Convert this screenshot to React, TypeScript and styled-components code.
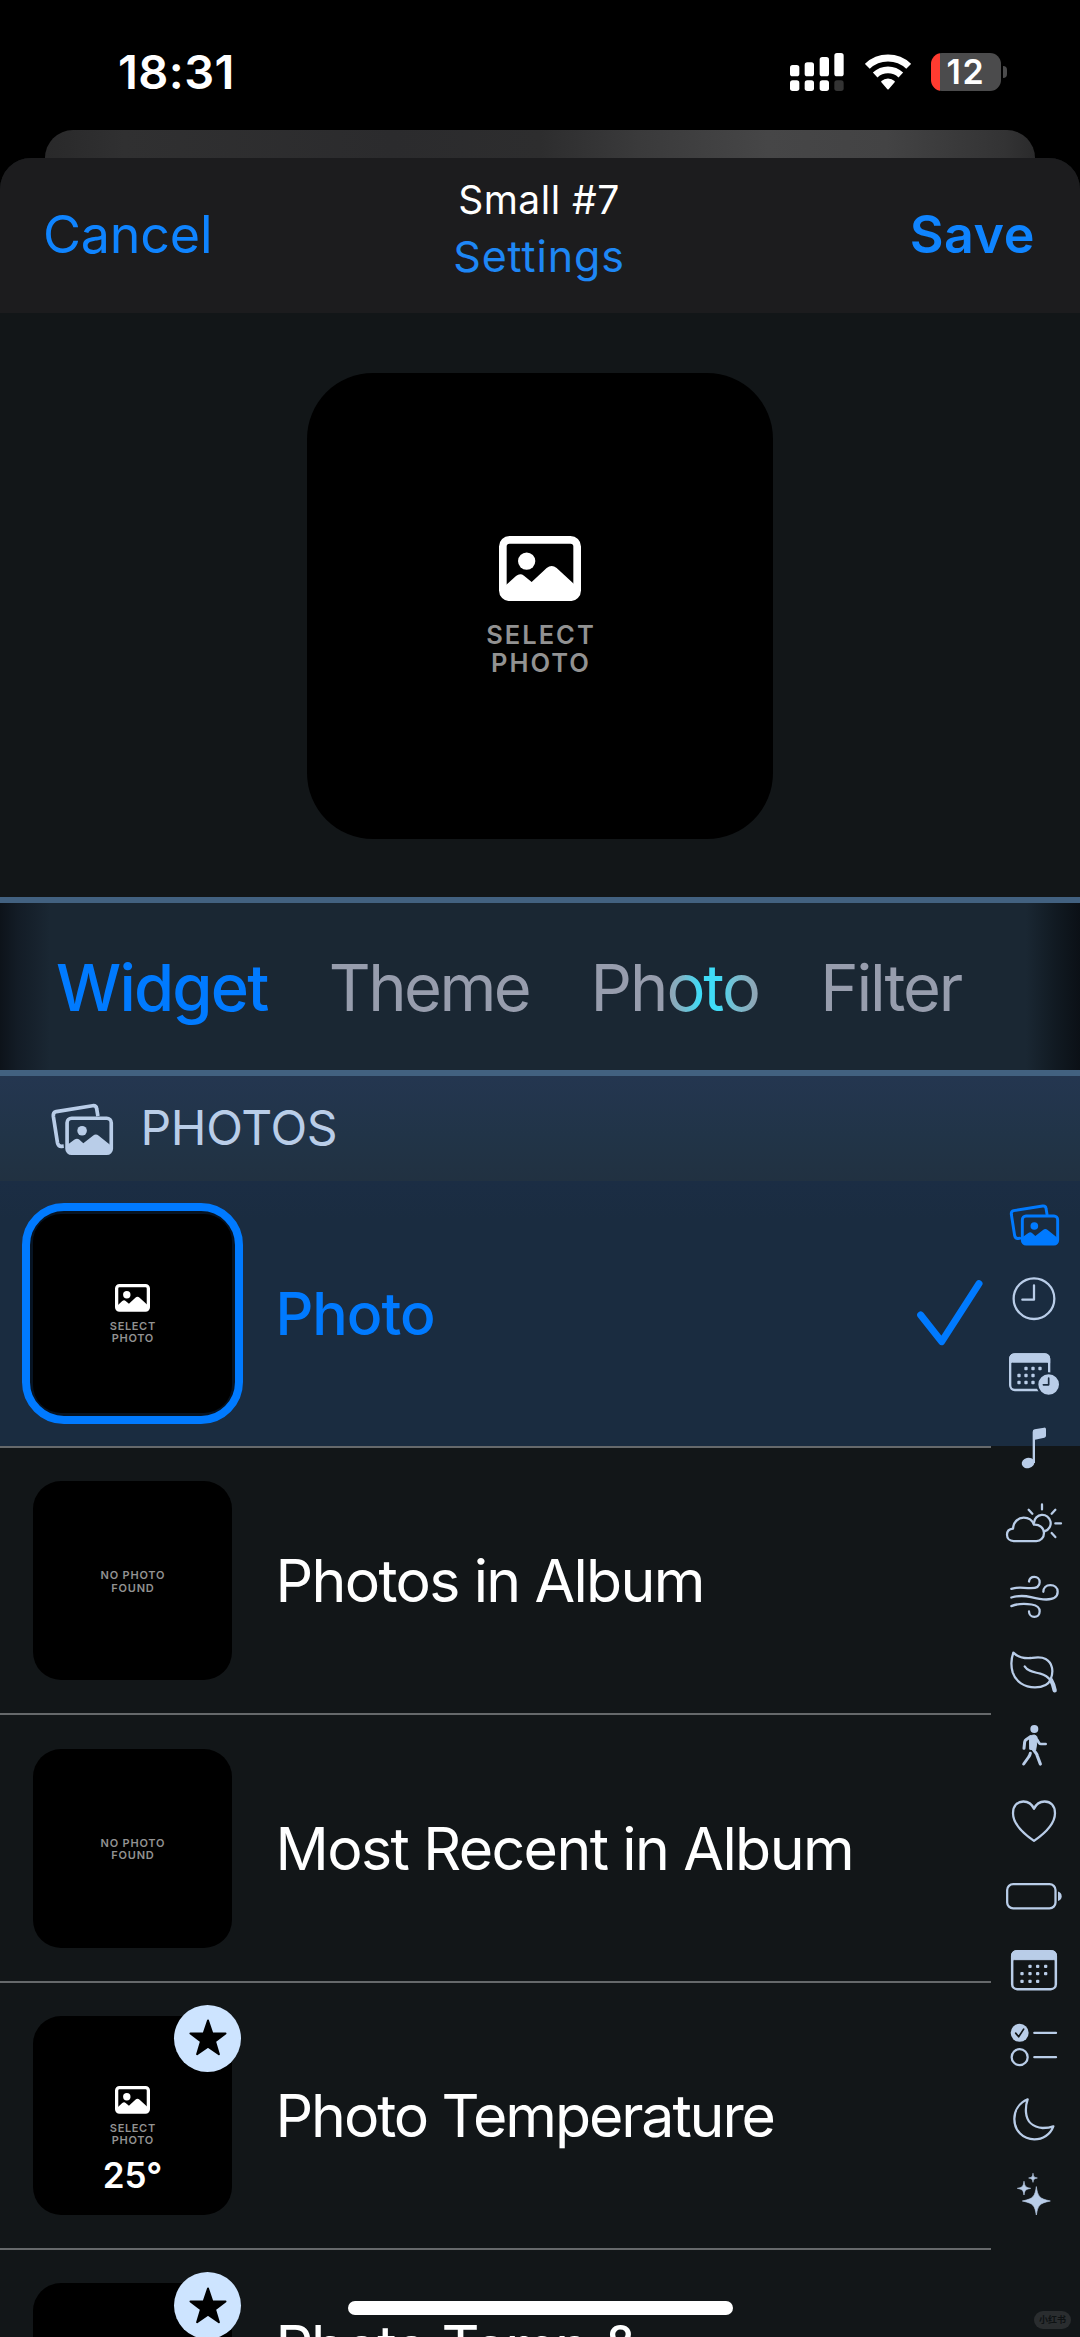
import React, { ReactNode } from "react";
import styled, { createGlobalStyle } from "styled-components";

const BLUE = "#007aff";
const PALE = "#b9cde8";
const INK = "#121618";
const NAVY = "#1a2c40";

const GlobalStyle = createGlobalStyle`
  body { margin: 0; background: #000; }
  * { box-sizing: border-box; }
`;

const Screen = styled.main`
  width: 1080px;
  height: 2337px;
  position: relative;
  overflow: hidden;
  display: flex;
  flex-direction: column;
  background: #000;
  color: #fff;
  font-family: Inter, "Noto Sans", "Liberation Sans", sans-serif;
`;

const Text = styled.span<{ $size: number; $weight?: number; $track?: number; $color?: string; $line?: number }>`
  font-size: ${(p) => p.$size}px;
  font-weight: ${(p) => p.$weight ?? 400};
  letter-spacing: ${(p) => p.$track ?? 0}px;
  color: ${(p) => p.$color ?? "inherit"};
  line-height: ${(p) => (p.$line ? `${p.$line}px` : "1.2")};
  white-space: nowrap;
`;

const StatusBar = styled.header`
  height: 130px;
  flex: none;
  padding: 14px 73px 0 118px;
  display: flex;
  align-items: center;
  justify-content: space-between;
`;

const StatusIcons = styled.div`
  display: flex;
  align-items: center;
`;

const SignalIcon = styled.svg`
  width: 54px;
  height: 38px;
  margin-right: 20.7px;
`;

const WifiIcon = styled.svg`
  width: 46px;
  height: 36px;
  margin-right: 20.3px;
`;

const BatteryBody = styled.div`
  width: 70px;
  height: 38px;
  border-radius: 11px;
  background: linear-gradient(90deg, #ff3b30 9px, #4b4b4c 9px);
  display: flex;
  align-items: center;
  justify-content: center;
`;

const BatteryCap = styled.div`
  width: 4px;
  height: 12px;
  margin-left: 2px;
  border-radius: 0 4px 4px 0;
  background: #4b4b4c;
`;

const BackCard = styled.div`
  height: 28px;
  flex: none;
  margin: 0 45px;
  border-radius: 28px 28px 0 0;
  background: linear-gradient(90deg, #29292a 0%, #303031 8%, #2b2b2d 35%, #2d2d2e 50%, #3a3a3b 60%, #464647 73%, #434344 85%, #333334 97%, #2a2a2b 100%);
`;

const Sheet = styled.section`
  flex: 1;
  min-height: 0;
  border-radius: 31px 31px 0 0;
  overflow: hidden;
  background: ${INK};
  display: flex;
  flex-direction: column;
`;

const NavBar = styled.div`
  height: 155px;
  flex: none;
  padding: 0 45px 0 43px;
  background: #1c1c1e;
  display: grid;
  grid-template-columns: 1fr auto 1fr;
  align-items: center;
`;

const NavTitle = styled.div`
  align-self: start;
  padding-top: 13px;
  display: flex;
  flex-direction: column;
  align-items: center;
`;

const NavEnd = styled.div`
  text-align: right;
`;

const Preview = styled.div`
  height: 584px;
  flex: none;
  padding-top: 1px;
  display: flex;
  align-items: center;
  justify-content: center;
`;

const PreviewTile = styled.div`
  width: 466px;
  height: 466px;
  padding-top: 163px;
  border-radius: 66px;
  background: #000;
  display: flex;
  flex-direction: column;
  align-items: center;
`;

const Caption = styled.div<{ $size: number; $line: number; $track: number; $gap: number; $weight: number }>`
  margin-top: ${(p) => p.$gap}px;
  padding-left: ${(p) => p.$track}px;
  color: #929292;
  text-align: center;
  font-size: ${(p) => p.$size}px;
  font-weight: ${(p) => p.$weight};
  line-height: ${(p) => p.$line}px;
  letter-spacing: ${(p) => p.$track}px;
  white-space: pre-line;
`;

const TabBar = styled.nav`
  height: 179px;
  flex: none;
  padding: 2px 56px 0;
  border-top: 6px solid #426180;
  border-bottom: 6px solid #426180;
  background: linear-gradient(90deg, #0d131a 0, #131c26 18px, #1a2733 50px, #1a2733 1026px, #111a22 1055px, #0b1016 1080px);
  display: flex;
  align-items: center;
  gap: 61.3px;
`;

const Tab = styled.span<{ $track: number; $active?: boolean; $shine?: boolean }>`
  font-size: 65px;
  line-height: 90px;
  font-weight: ${(p) => (p.$active ? 500 : 400)};
  letter-spacing: ${(p) => p.$track}px;
  color: ${(p) => (p.$active ? BLUE : "#979dad")};
  ${(p) =>
    p.$shine &&
    `
    color: transparent;
    background: linear-gradient(90deg, #979dad 44%, #7fb4c6 54%, #3fdcf7 65%, #3fdcf7 76%, #74bfd2 85%, #8fa5b5 98%);
    background-clip: text;
    -webkit-background-clip: text;
  `}
`;

const ListArea = styled.div`
  position: relative;
  flex: 1;
  min-height: 0;
`;

const SectionHeader = styled.div`
  height: 104.6px;
  padding: 0 0 1px 50px;
  background: linear-gradient(180deg, #243650 0%, #213448 55%, #213141 100%);
  display: flex;
  align-items: center;
  gap: 25.5px;
`;

const SectionIcon = styled.svg`
  width: 65px;
  height: 55px;
  margin-top: 3px;
`;

const Row = styled.div<{ $selected?: boolean }>`
  height: 265.4px;
  padding: 0 97px 0 33px;
  display: flex;
  align-items: center;
  gap: 43.5px;
  background: ${(p) => (p.$selected ? `linear-gradient(180deg, #1b2d44 0, ${NAVY} 40px)` : "transparent")};
`;

const Separator = styled.hr`
  width: 991px;
  height: 2px;
  margin: 0;
  border: 0;
  background: #66696b;
`;

const Tile = styled.div<{ $selected?: boolean; $centered?: boolean }>`
  position: relative;
  flex: none;
  width: 199px;
  height: 199px;
  padding-top: ${(p) => (p.$centered ? "2px" : "70px")};
  border-radius: 28px;
  background: #000;
  display: flex;
  flex-direction: column;
  align-items: center;
  justify-content: ${(p) => (p.$centered ? "center" : "flex-start")};
  ${(p) =>
    p.$selected &&
    `
    box-shadow: 0 0 0 3px #061322;
    &::after {
      content: "";
      position: absolute;
      inset: -11px;
      border: 8.5px solid ${BLUE};
      border-radius: 42px;
    }
  `}
`;

const Badge = styled.div`
  position: absolute;
  top: -11px;
  right: -9px;
  width: 67px;
  height: 67px;
  border-radius: 50%;
  background: #cde4ff;
  display: flex;
  align-items: center;
  justify-content: center;
`;

const BadgeStar = styled.svg`
  width: 40px;
  height: 40px;
`;

const Temperature = styled.div`
  margin-top: 10.5px;
  font-size: 35px;
  line-height: 36px;
  font-weight: 600;
`;

const RowLabel = styled.span<{ $track: number; $selected?: boolean; $raised?: boolean }>`
  font-size: 59px;
  line-height: 71px;
  font-weight: ${(p) => (p.$selected ? 500 : 400)};
  letter-spacing: ${(p) => p.$track}px;
  color: ${(p) => (p.$selected ? BLUE : "#fff")};
  white-space: nowrap;
  ${(p) => p.$raised && "align-self: flex-start; padding-top: 61px;"}
`;

const CheckIcon = styled.svg`
  width: 66px;
  height: 66px;
  margin-left: auto;
`;

const IndexRail = styled.nav`
  position: absolute;
  top: 111.4px;
  right: 17.5px;
  display: grid;
  grid-auto-rows: 74.56px;
  align-items: center;
`;

const IndexIcon = styled.svg`
  width: 60px;
  height: 60px;
  overflow: visible;
  fill: none;
  stroke: ${PALE};
  stroke-width: 6.8;
  stroke-linecap: round;
  stroke-linejoin: round;
`;

const HomeIndicator = styled.div`
  position: absolute;
  left: 348px;
  bottom: 22px;
  width: 385px;
  height: 14px;
  border-radius: 7px;
  background: #fff;
`;

const Watermark = styled.div`
  position: absolute;
  right: 9px;
  bottom: 8px;
  width: 37px;
  height: 18px;
  border-radius: 9px;
  background: #2a2d2f;
  color: #0e1213;
  font: 700 9px/18px "Noto Sans CJK SC", sans-serif;
  text-align: center;
`;

function PhotoGlyph({ width }: { width: number }) {
  return (
    <svg width={width} height={width * 0.794} viewBox="657 558 246 195">
      <rect x="668.5" y="569.5" width="223" height="172" rx="20" fill="none" stroke="#fff" strokeWidth="23" />
      <circle cx="740" cy="633" r="26" fill="#fff" />
      <path d="M678 705 L708 678 Q720 668 732 677 L755 696 L800 654 Q815 642 830 654 L882 702 V745 H678 Z" fill="#fff" />
    </svg>
  );
}

function SelectPhoto() {
  return (
    <>
      <PhotoGlyph width={35} />
      <Caption $size={11} $line={12.2} $track={0.65} $gap={8} $weight={600}>
        {"SELECT\nPHOTO"}
      </Caption>
    </>
  );
}

function NoPhoto() {
  return (
    <Caption $size={11} $line={12.2} $track={0.8} $gap={0} $weight={600}>
      {"NO PHOTO\nFOUND"}
    </Caption>
  );
}

function StarBadge() {
  return (
    <Badge>
      <BadgeStar viewBox="0 0 40 40">
        <path
          d="M20 2.5 L24.3 15.2 L37.5 15.4 L27 23.4 L30.9 36.2 L20 28.6 L9.1 36.2 L13 23.4 L2.5 15.4 L15.7 15.2 Z"
          fill="#000"
          stroke="#000"
          strokeWidth="2"
          strokeLinejoin="round"
        />
      </BadgeStar>
    </Badge>
  );
}

function PhotoStack({ color }: { color: string }) {
  return (
    <g fill="none" stroke={color} strokeWidth="8.8">
      <path d="M416 174 L411 174.5 Q403 175 401 166 L391 102 Q390 93 398 91 L485 77 Q494 76 495 84 L498 102" />
      <rect x="424" y="107" width="106" height="84" rx="11" />
      <circle cx="460" cy="137" r="11.5" fill={color} stroke="none" />
      <path d="M424 171 L442 158 Q448 154 453 158 L463 167 L486 149 Q493 143 500 149 L530 173 V188 H424 Z" fill={color} stroke="none" />
    </g>
  );
}

function Dots({ points, size = 10 }: { points: [number, number][]; size?: number }) {
  return (
    <g fill={PALE} stroke="none">
      {points.map(([x, y]) => (
        <rect key={`${x}-${y}`} x={x - size / 2} y={y - size / 2} width={size} height={size} rx="3" />
      ))}
    </g>
  );
}

const sparkle = (x: number, y: number, r: number) => {
  const k = r * 0.17;
  const m = r * 0.34;
  return (
    `M${x} ${y - r} C${x + k * 0.7} ${y - m} ${x + k} ${y - k} ${x + r} ${y} ` +
    `C${x + k} ${y + k} ${x + k * 0.7} ${y + m} ${x} ${y + r} ` +
    `C${x - k * 0.7} ${y + m} ${x - k} ${y + k} ${x - r} ${y} ` +
    `C${x - k} ${y - k} ${x - k * 0.7} ${y - m} ${x} ${y - r} Z`
  );
};

const indexIcons: { name: string; box: string; art: ReactNode }[] = [
  { name: "Photos", box: "366 44 180 180", art: <PhotoStack color={BLUE} /> },
  {
    name: "Time",
    box: "366 268 180 180",
    art: (
      <>
        <circle cx="459" cy="357" r="61" />
        <path d="M459 317 V360 H424" />
      </>
    ),
  },
  {
    name: "Schedule",
    box: "366 491.5 180 180",
    art: (
      <>
        <rect x="387.5" y="522.5" width="117" height="107" rx="14" strokeWidth="7" />
        <path d="M386 549 V535 Q386 521 400 521 H492 Q506 521 506 535 V549 Q504 546 498 546 H394 Q388 546 386 549 Z" fill={PALE} strokeWidth="3" />
        <Dots points={[[435, 565], [456, 565], [477, 565], [414, 586], [435, 586], [456, 586], [414, 607], [435, 607], [456, 607]]} />
        <circle cx="503" cy="613" r="34" fill={PALE} stroke={NAVY} strokeWidth="6" />
        <path d="M503 594 V614 H487" stroke={NAVY} strokeWidth="5" />
      </>
    ),
  },
  {
    name: "Music",
    box: "366 715 180 180",
    art: (
      <>
        <path d="M455 757 Q455 750 461 749 L489 744 Q495 743 495 749 V768 Q495 773 490 774 L462 780 V850 H455 Z" fill={PALE} stroke="none" />
        <ellipse cx="441" cy="850" rx="19" ry="15.5" transform="rotate(-14 441 850)" fill={PALE} stroke="none" />
      </>
    ),
  },
  {
    name: "Weather",
    box: "126 68.8 180 180",
    art: (
      <>
        <path d="M158 213 C146 213 138 205 138 194 C138 184 145 177 156 176 C157 157 170 143 188 143 C203 143 214 151 219 164 C236 163 249 174 249 189 C249 203 239 213 226 213 Z" />
        <path d="M219 158 A25 25 0 1 1 252 183" />
        <path d="M243 103 V118 M203 119 L214 131 M283 119 L272 131 M283 160 H300 M272 189 L283 201" />
      </>
    ),
  },
  {
    name: "Wind",
    box: "126 292.5 180 180",
    art: (
      <>
        <path d="M151 358 C175 350 185 356 210 356 C228 356 236 350 236 338 C236 328 229 322 220 322 C211 322 205 328 204 336" />
        <path d="M151 384 C175 377 190 378 210 383 C230 388 240 390 256 390 C277 390 290 382 290 367 C290 354 280 347 268 347 C255 347 247 355 247 367" />
        <path d="M151 410 C170 402 195 402 212 405 C228 408 236 414 236 425 C236 436 229 442 220 442 C211 442 204 435 204 426" />
      </>
    ),
  },
  {
    name: "Nature",
    box: "126 516 180 180",
    art: (
      <>
        <path d="M157 548 C151 565 150 590 155 607 C164 635 190 652 222 652 C245 652 262 645 269 628 C279 603 274 578 254 567 C240 559 225 562 211 564 C190 566 171 562 157 548 Z" />
        <path d="M191 589 C202 606 220 606 238 611 C252 615 262 622 270 632" />
        <path d="M270 630 C276 640 279 650 281 661" strokeWidth="13" />
      </>
    ),
  },
  {
    name: "Activity",
    box: "126 740 180 180",
    art: (
      <>
        <circle cx="220" cy="779" r="12" fill={PALE} stroke="none" />
        <path d="M206 803 Q211 796 220 797 Q230 799 229 810 L224 842 L207 840 Z" fill={PALE} strokeWidth="3" />
        <path d="M208 802 L195 811 Q192 813 191 818 L189 837" strokeWidth="9" />
        <path d="M229 812 L235 822 Q236 824 240 824 H254" strokeWidth="8" />
        <path d="M208 852 Q207 858 203 863 L188 884" strokeWidth="9" />
        <path d="M215 838 L226 853 Q228 856 229 860 L238 884" strokeWidth="9.5" />
      </>
    ),
  },
  {
    name: "Health",
    box: "126 63.5 180 180",
    art: <path d="M219 213 C180 186 156 160 156 130 C156 108 169 95 187 95 C202 95 213 103 219 117 C225 103 236 95 251 95 C269 95 282 108 282 130 C282 160 258 186 219 213 Z" />,
  },
  {
    name: "Battery",
    box: "126 287.2 180 180",
    art: (
      <>
        <rect x="138.5" y="341.5" width="145" height="73" rx="18" />
        <path d="M291 364 Q302 367 302 378 Q302 389 291 392 Z" fill={PALE} stroke="none" />
      </>
    ),
  },
  {
    name: "Calendar",
    box: "126 511 180 180",
    art: (
      <>
        <rect x="153.5" y="544.5" width="131" height="114" rx="15" strokeWidth="7.5" />
        <path d="M152 573 V557 Q152 543 166 543 H272 Q286 543 286 557 V573 Q284 570 278 570 H160 Q154 570 152 573 Z" fill={PALE} strokeWidth="3" />
        <Dots points={[[207, 590], [230, 590], [254, 590], [183, 612], [207, 612], [230, 612], [254, 612], [183, 635], [207, 635], [230, 635]]} />
      </>
    ),
  },
  {
    name: "Reminders",
    box: "126 164.6 180 180",
    art: (
      <>
        <circle cx="176" cy="218" r="27" fill={PALE} stroke="none" />
        <path d="M164 219 L173 230 L188 207" stroke={INK} strokeWidth="5" />
        <path d="M220 218 H285 M220 291 H285" strokeWidth="7" />
        <circle cx="176" cy="291" r="24" />
      </>
    ),
  },
  {
    name: "Moon",
    box: "126 388 180 180",
    art: <path d="M200 419 C175 430 160 452 160 478 C160 513 186 539 220 539 C245 539 268 525 277 500 C267 504 256 505 245 505 C215 503 197 485 195 458 C194 445 196 430 200 419 Z" />,
  },
  {
    name: "Sparkles",
    box: "126 612 180 180",
    art: (
      <g fill={PALE} strokeWidth="2">
        <path d={sparkle(226, 723, 42)} />
        <path d={sparkle(189, 685, 20)} />
        <path d={sparkle(216, 654, 13)} />
      </g>
    ),
  },
];

export default function App() {
  return (
    <Screen>
      <GlobalStyle />
      <StatusBar>
        <Text $size={47} $weight={600} $track={0.4}>18:31</Text>
        <StatusIcons>
          <SignalIcon viewBox="60 38 162 114">
            <g fill="#fff">
              <rect x="60" y="74" width="28" height="34" rx="8" />
              <rect x="104" y="66" width="28" height="42" rx="8" />
              <rect x="149" y="50" width="28" height="58" rx="8" />
              <rect x="193" y="38" width="28" height="70" rx="8" />
              <rect x="60" y="120" width="28" height="32" rx="8" />
              <rect x="104" y="120" width="28" height="32" rx="8" />
              <rect x="149" y="120" width="28" height="32" rx="8" />
              <rect x="193" y="120" width="28" height="32" rx="8" fill="#333" />
            </g>
          </SignalIcon>
          <WifiIcon viewBox="284 41 138 108" fill="none" stroke="#fff">
            <path d="M291 78 A90 90 0 0 1 415 78" strokeWidth="21" />
            <path d="M314.5 104 A56 56 0 0 1 391.5 104" strokeWidth="20" />
            <path d="M353 145 L335 124 A27 27 0 0 1 371 124 Z" fill="#fff" strokeWidth="5" strokeLinejoin="round" />
          </WifiIcon>
          <BatteryBody>
            <Text $size={34} $weight={600} $track={1.6}>12</Text>
          </BatteryBody>
          <BatteryCap />
        </StatusIcons>
      </StatusBar>
      <BackCard />
      <Sheet>
        <NavBar>
          <Text $size={52} $track={-0.2} $color="#0f84ff">Cancel</Text>
          <NavTitle>
            <Text $size={39} $track={0.48} $line={57}>Small #7</Text>
            <Text $size={43} $track={0.87} $line={57} $color="#1e87f5">Settings</Text>
          </NavTitle>
          <NavEnd>
            <Text $size={52} $weight={600} $track={0.54} $color="#0f84ff">Save</Text>
          </NavEnd>
        </NavBar>
        <Preview>
          <PreviewTile>
            <PhotoGlyph width={82} />
            <Caption $size={25.5} $line={28.4} $track={2} $gap={20} $weight={600}>
              {"SELECT\nPHOTO"}
            </Caption>
          </PreviewTile>
        </Preview>
        <TabBar>
          <Tab $active $track={-1.8}>Widget</Tab>
          <Tab $track={-2.56}>Theme</Tab>
          <Tab $track={-2.01} $shine>Photo</Tab>
          <Tab $track={-2.17}>Filter</Tab>
        </TabBar>
        <ListArea>
          <SectionHeader>
            <SectionIcon viewBox="383 68 156 132">
              <PhotoStack color={PALE} />
            </SectionIcon>
            <Text $size={48} $track={-0.31} $color={PALE}>PHOTOS</Text>
          </SectionHeader>
          <Row $selected>
            <Tile $selected>
              <SelectPhoto />
            </Tile>
            <RowLabel $track={-1} $selected>Photo</RowLabel>
            <CheckIcon viewBox="110 302 198 198" fill="none" stroke={BLUE} strokeWidth="21" strokeLinecap="round" strokeLinejoin="round">
              <path d="M121 407 L184 487 L296 313" />
            </CheckIcon>
          </Row>
          <Separator />
          <Row>
            <Tile $centered>
              <NoPhoto />
            </Tile>
            <RowLabel $track={-1.66}>Photos in Album</RowLabel>
          </Row>
          <Separator />
          <Row>
            <Tile $centered>
              <NoPhoto />
            </Tile>
            <RowLabel $track={-1.6}>Most Recent in Album</RowLabel>
          </Row>
          <Separator />
          <Row>
            <Tile>
              <SelectPhoto />
              <Temperature>25°</Temperature>
              <StarBadge />
            </Tile>
            <RowLabel $track={-2.09}>Photo Temperature</RowLabel>
          </Row>
          <Separator />
          <Row>
            <Tile>
              <StarBadge />
            </Tile>
            <RowLabel $track={-2.09} $raised>Photo Temp &amp;</RowLabel>
          </Row>
          <IndexRail>
            {indexIcons.map((icon) => (
              <IndexIcon key={icon.name} viewBox={icon.box} aria-label={icon.name}>
                {icon.art}
              </IndexIcon>
            ))}
          </IndexRail>
        </ListArea>
      </Sheet>
      <HomeIndicator />
      <Watermark>小红书</Watermark>
    </Screen>
  );
}
